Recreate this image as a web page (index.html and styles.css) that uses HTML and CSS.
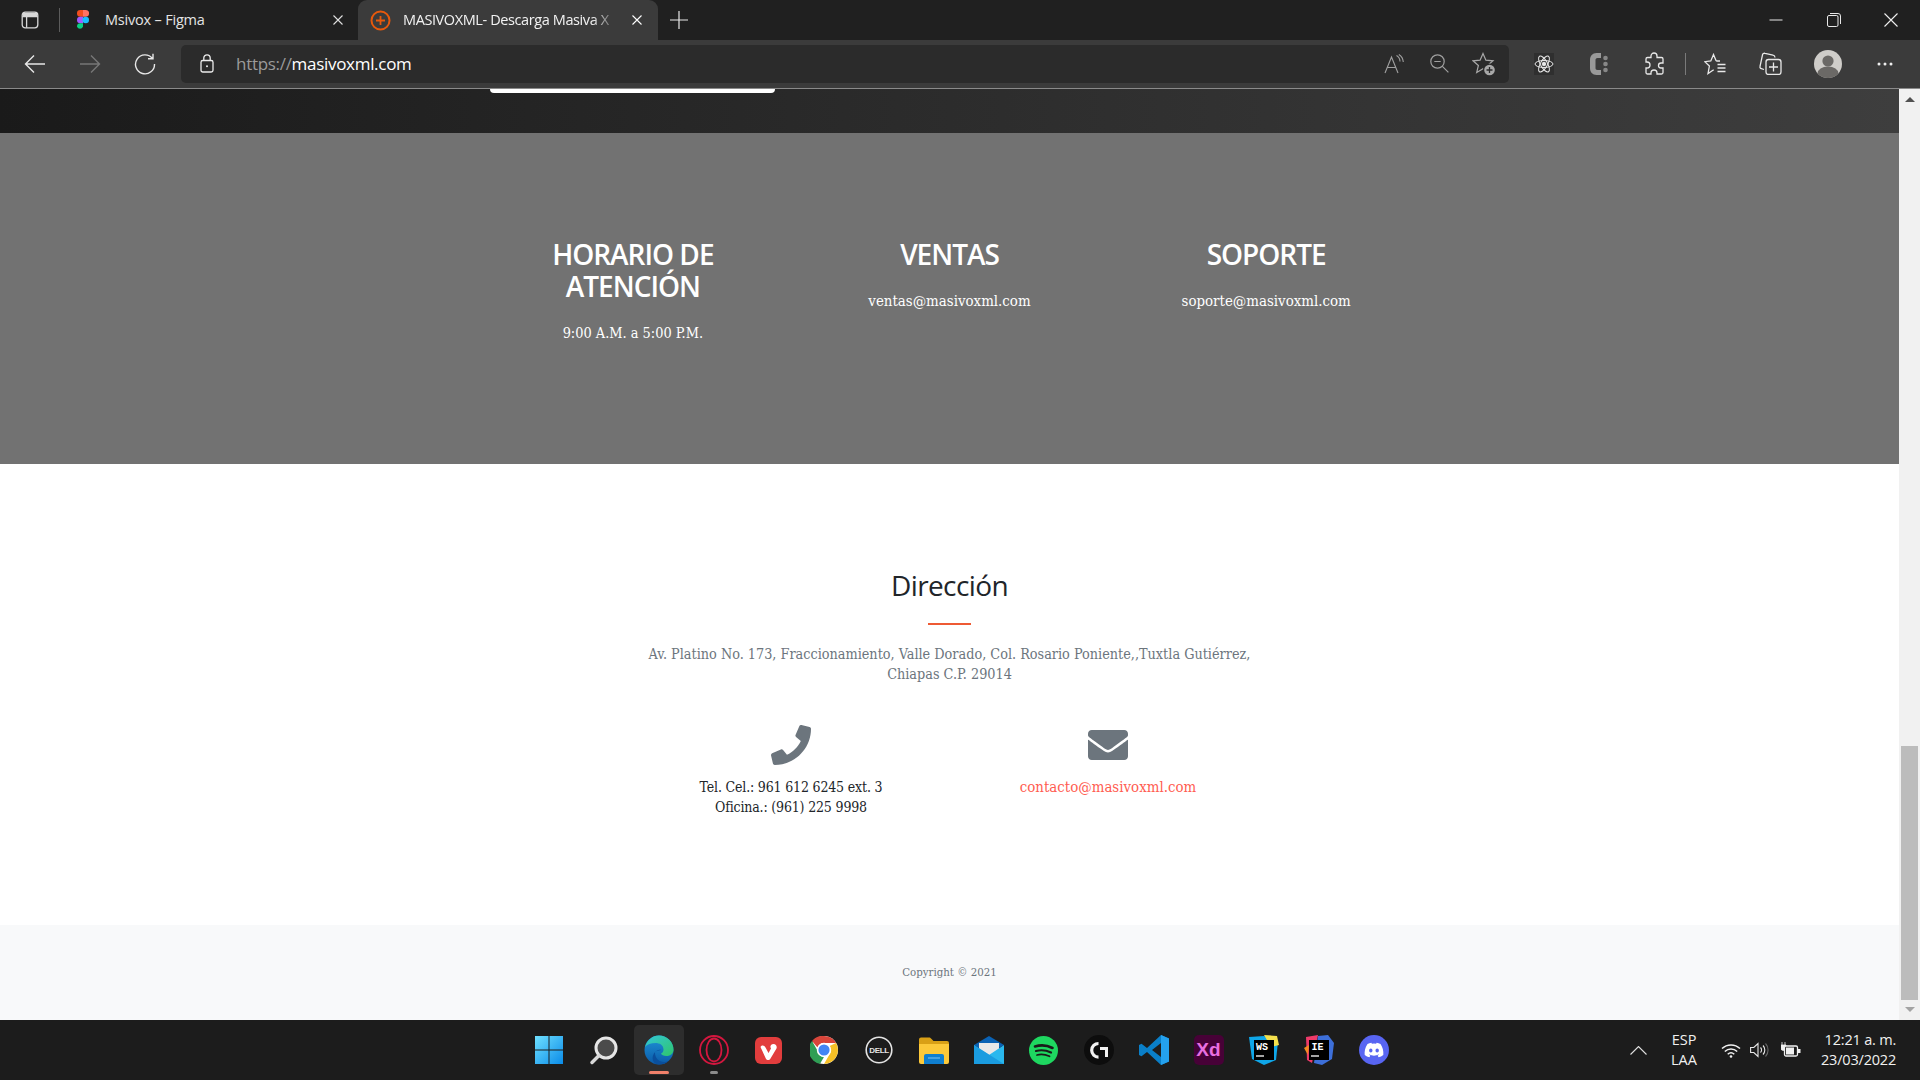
FILE: index.html
```html
<!DOCTYPE html>
<html lang="es">
<head>
<meta charset="utf-8">
<title>MASIVOXML</title>
<link rel="stylesheet" href="styles.css">
</head>
<body>
<div class="window">
  <header class="tabstrip">
    <div class="panel-btn">
      <svg width="18" height="18" viewBox="0 0 18 18" fill="none" stroke="#d8d8d8" stroke-width="1.3"><rect x="1.2" y="1.2" width="15.6" height="15.6" rx="3"/><path d="M1.2 5.6h15.6M5.6 5.6v11.2"/><rect x="1.8" y="1.8" width="14.4" height="3.6" fill="#d8d8d8" stroke="none"/></svg>
    </div>
    <div class="tab-sep"></div>
    <div class="tab">
      <svg class="fav" width="12" height="20" viewBox="0 0 12 20"><path fill="#f24e1e" d="M0 3.3A3.3 3.3 0 0 1 3.300 0H6v6.700H3.300A3.300 3.300 0 0 1 0 3.300z"/><path fill="#ff7262" d="M6 0h2.700a3.300 3.300 0 0 1 0 6.700H6z"/><path fill="#a259ff" d="M0 10a3.300 3.300 0 0 1 3.300-3.300H6v6.600H3.300A3.300 3.300 0 0 1 0 10z"/><circle fill="#1abcfe" cx="8.700" cy="10" r="3.300"/><path fill="#0acf83" d="M0 16.700a3.300 3.300 0 0 1 3.300-3.400H6v3.400a3.300 3.300 0 0 1-6 0z"/></svg>
      <span class="tab-title">Msivox – Figma</span>
      <svg class="tab-x" width="12" height="12" viewBox="0 0 12 12" stroke="#e0e0e0" stroke-width="1.1"><path d="M1.500 1.500l9 9M10.500 1.500l-9 9"/></svg>
    </div>
    <div class="tab tab-active">
      <svg class="fav" width="21" height="21" viewBox="0 0 21 21" fill="none" stroke="#e8590c"><circle cx="10.500" cy="10.500" r="9" stroke-width="2"/><path d="M10.500 6v9M6 10.500h9" stroke-width="1.800"/></svg>
      <span class="tab-title tab-fade">MASIVOXML- Descarga Masiva X</span>
      <svg class="tab-x" width="12" height="12" viewBox="0 0 12 12" stroke="#fff" stroke-width="1.1"><path d="M1.500 1.500l9 9M10.500 1.500l-9 9"/></svg>
    </div>
    <div class="new-tab">
      <svg width="18" height="18" viewBox="0 0 18 18" stroke="#e8e8e8" stroke-width="1.200"><path d="M9 0v18M0 9h18"/></svg>
    </div>
    <div class="win-ctrls">
      <div class="win-btn"><svg width="14" height="14" viewBox="0 0 14 14" stroke="#e8e8e8"><path d="M0.500 7h13"/></svg></div>
      <div class="win-btn"><svg width="14" height="14" viewBox="0 0 14 14" fill="none" stroke="#e8e8e8"><rect x="0.500" y="2.500" width="10.500" height="11" rx="1.500"/><path d="M3 0.500h8a2.500 2.500 0 0 1 2.500 2.500v8"/></svg></div>
      <div class="win-btn"><svg width="14" height="14" viewBox="0 0 14 14" stroke="#f0f0f0" stroke-width="1.100"><path d="M0.500 0.500l13 13M13.500 0.500l-13 13"/></svg></div>
    </div>
  </header>

  <nav class="toolbar">
    <div class="tool"><svg width="22" height="20" viewBox="0 0 22 20" fill="none" stroke="#e8e8e8" stroke-width="1.400"><path d="M21 10H1.500M10 1.500L1.500 10l8.500 8.500"/></svg></div>
    <div class="tool"><svg width="22" height="20" viewBox="0 0 22 20" fill="none" stroke="#777" stroke-width="1.400"><path d="M1 10h19.500M12 1.500l8.500 8.500-8.500 8.500"/></svg></div>
    <div class="tool"><svg width="22" height="22" viewBox="0 0 22 22" fill="none" stroke="#e8e8e8" stroke-width="1.400"><path d="M18.500 5.500A9.500 9.500 0 1 0 20.500 11M19 0.800v5h-5"/></svg></div>
    <div class="address">
      <svg class="lock" width="14" height="19" viewBox="0 0 14 19" fill="none" stroke="#ececec" stroke-width="1.300"><rect x="1" y="6.500" width="12" height="11.500" rx="1.800"/><path d="M3.800 6.500V4a3.200 3.200 0 0 1 6.400 0v2.500"/><circle cx="7" cy="12.300" r="1" fill="#ececec" stroke="none"/></svg>
      <span class="url"><span class="url-dim">https://</span>masivoxml.com</span>
      <div class="addr-icons">
        <div class="addr-icon"><svg width="20" height="20" viewBox="0 0 20 20" fill="none" stroke="#a0a0a0" stroke-width="1.100"><path d="M1 19L7.500 3 14 19M3.400 13.500h8.200M12.500 1.500a7 7 0 0 1 3.500 6M14.800 0.500a9.500 9.500 0 0 1 4.500 7.500"/></svg></div>
        <div class="addr-icon"><svg width="19" height="19" viewBox="0 0 19 19" fill="none" stroke="#a0a0a0" stroke-width="1.200"><circle cx="7.500" cy="7.500" r="6.700"/><path d="M12.400 12.400l6 6M4.300 7.500h6.400"/></svg></div>
        <div class="addr-icon"><svg width="24" height="24" viewBox="0 0 24 24" fill="none" stroke="#a8a8a8" stroke-width="1.200"><path d="M11 1.500l2.900 6.700 7.100.6-5.400 4.700 1.700 7-6.300-3.700-6.300 3.700 1.700-7L1 8.800l7.100-.6z"/><circle cx="17.500" cy="18" r="6.500" fill="#2b2b2b" stroke="none"/><circle cx="17.500" cy="18" r="5.300" fill="#a8a8a8" stroke="none"/><path d="M17.500 15v6M14.500 18h6" stroke="#2b2b2b" stroke-width="1.300"/></svg></div>
      </div>
    </div>
    <div class="tool-group">
      <div class="tool"><svg width="20" height="22" viewBox="0 0 20 22" fill="none" stroke="#e8e8e8" stroke-width="1"><rect width="20" height="22" fill="#2f2f2f" stroke="none"/><ellipse cx="10" cy="11" rx="9" ry="3.500"/><ellipse cx="10" cy="11" rx="9" ry="3.500" transform="rotate(60 10 11)"/><ellipse cx="10" cy="11" rx="9" ry="3.500" transform="rotate(120 10 11)"/><circle cx="10" cy="11" r="1.800" fill="#e8e8e8"/></svg></div>
      <div class="tool"><svg width="20" height="24" viewBox="0 0 20 24"><path d="M12 1H7.500C3.500 1 1 4 1 8v8c0 4 2.500 7 6.500 7H12v-5H8.500C7 18 6.500 17 6.500 16V8c0-1 .5-2 2-2H12z" fill="#999"/><circle cx="16.500" cy="6" r="2.300" fill="#888"/><circle cx="16.500" cy="12" r="2.300" fill="#888"/><circle cx="16.500" cy="18" r="2.300" fill="#888"/></svg></div>
      <div class="tool"><svg width="20" height="23" viewBox="0 0 20 23" fill="none" stroke="#e8e8e8" stroke-width="1.300"><path d="M7 5.500V4a3 3 0 0 1 6 0v1.500h4.500a1.500 1.500 0 0 1 1.500 1.500v4h-2a2.500 2.500 0 0 0 0 5h2v4.500a1.500 1.500 0 0 1-1.500 1.500H13v-1a3 3 0 0 0-6 0v1H3.500A1.500 1.500 0 0 1 2 20.500V16h1a3 3 0 0 0 0-6H2V7a1.500 1.500 0 0 1 1.500-1.500z"/></svg></div>
      <div class="tool-sep"></div>
      <div class="tool"><svg width="22" height="22" viewBox="0 0 22 22" fill="none" stroke="#e8e8e8" stroke-width="1.300"><path d="M12.200 8L9.500 1.500 6.800 8 .8 8.700l4.600 4.400L4 20.500l5.700-3.800M12.200 8h3.800M13.500 11.500h8M13.500 15h8M13.500 18.500h8"/></svg></div>
      <div class="tool"><svg width="23" height="23" viewBox="0 0 23 23" fill="none" stroke="#e8e8e8" stroke-width="1.300"><path d="M5 17.500l-2.700-.8A1.800 1.800 0 0 1 1 14.500L3.500 3A2 2 0 0 1 6 1.300l8 1.900a2.500 2.500 0 0 1 2 2.300"/><rect x="7" y="7.500" width="15" height="15" rx="2.500"/><path d="M14.500 10.500v9M10 15h9"/></svg></div>
      <div class="avatar"><svg width="28" height="28" viewBox="0 0 28 28"><circle cx="14" cy="14" r="14" fill="#cfcdc9"/><circle cx="14" cy="11" r="5.600" fill="#6b6966"/><path d="M3.500 23.500a10.500 7 0 0 1 21 0A14 14 0 0 1 14 28a14 14 0 0 1-10.500-4.500z" fill="#6b6966"/></svg></div>
      <div class="tool tool-dots"><svg width="16" height="4" viewBox="0 0 16 4" fill="#eee"><circle cx="2" cy="2" r="1.500"/><circle cx="8" cy="2" r="1.500"/><circle cx="14" cy="2" r="1.500"/></svg></div>
    </div>
  </nav>

  <div class="viewport">
    <main class="page">
      <section class="hero-end">
        <div class="hero-inner"><div class="hero-btn"></div></div>
      </section>
      <section class="contact-band">
        <div class="band-grid">
          <div class="band-col">
            <h3 class="band-title">HORARIO DE ATENCIÓN</h3>
            <p class="band-text band-time">9:00 A.M. a 5:00 P.M.</p>
          </div>
          <div class="band-col">
            <h3 class="band-title">VENTAS</h3>
            <p class="band-text">ventas@masivoxml.com</p>
          </div>
          <div class="band-col">
            <h3 class="band-title">SOPORTE</h3>
            <p class="band-text">soporte@masivoxml.com</p>
          </div>
        </div>
      </section>
      <section class="address-section">
        <h2 class="addr-title">Dirección</h2>
        <div class="addr-rule"></div>
        <p class="addr-text">Av. Platino No. 173, Fraccionamiento, Valle Dorado, Col. Rosario Poniente,,Tuxtla Gutiérrez, Chiapas C.P. 29014</p>
        <div class="contact-grid">
          <div class="contact-col">
            <svg class="contact-icon" width="40" height="40" viewBox="0 0 512 512"><path fill="#6c757d" d="M493.4 24.6l-104-24c-11.3-2.6-22.9 3.300-27.500 13.900l-48 112c-4.200 9.800-1.400 21.300 6.900 28l60.600 49.600c-36 76.700-98.900 140.500-177.200 177.200l-49.600-60.600c-6.800-8.300-18.200-11.100-28-6.900l-112 48C3.900 366.500-2 378.100.6 389.400l24 104C27.100 504.200 36.700 512 48 512c256.100 0 464-207.500 464-464 0-11.200-7.700-20.900-18.600-23.400z"/></svg>
            <p class="contact-line">Tel. Cel.: 961 612 6245 ext. 3</p>
            <p class="contact-line">Oficina.: (961) 225 9998</p>
          </div>
          <div class="contact-col">
            <svg class="contact-icon" width="40" height="40" viewBox="0 0 512 512"><path fill="#6c757d" d="M502.300 190.800c3.900-3.100 9.700-.2 9.700 4.700V400c0 26.500-21.500 48-48 48H48c-26.500 0-48-21.500-48-48V195.600c0-5 5.700-7.800 9.700-4.700 22.400 17.400 52.100 39.500 154.100 113.600 21.100 15.400 56.700 47.800 92.200 47.600 35.700.3 72-32.800 92.300-47.600 102-74.100 131.600-96.300 154-113.700zM256 320c23.200.4 56.600-29.200 73.400-41.400 132.700-96.300 142.800-104.700 173.400-128.700 5.800-4.500 9.200-11.500 9.200-18.900v-19c0-26.500-21.500-48-48-48H48C21.500 64 0 85.500 0 112v19c0 7.400 3.400 14.300 9.200 18.900 30.600 23.900 40.700 32.400 173.400 128.700 16.800 12.200 50.200 41.800 73.400 41.400z"/></svg>
            <p class="contact-line contact-link">contacto@masivoxml.com</p>
          </div>
        </div>
      </section>
      <footer class="page-footer">Copyright © 2021</footer>
    </main>
    <aside class="scrollbar">
      <div class="sb-arrow sb-up"></div>
      <div class="sb-track"><div class="sb-thumb"></div></div>
      <div class="sb-arrow sb-down"></div>
    </aside>
  </div>

  <footer class="taskbar">
    <div class="task-item"><svg width="30" height="30" viewBox="0 0 30 30"><defs><linearGradient id="w" x1="0" y1="0" x2="1" y2="1"><stop offset="0" stop-color="#6fe0ff"/><stop offset="1" stop-color="#0a8be8"/></linearGradient></defs><path fill="url(#w)" d="M1 1h13.500v13.500H1zM15.500 1H29v13.500H15.500zM1 15.500h13.500V29H1zM15.500 15.500H29V29H15.500z"/></svg></div>
    <div class="task-item"><svg width="30" height="30" viewBox="0 0 30 30"><circle cx="17" cy="13" r="10" fill="#4b4b4b" stroke="#e6e6e6" stroke-width="3"/><path d="M10 20.500L3 27.500" stroke="#d8d8d8" stroke-width="3.500" stroke-linecap="round"/></svg></div>
    <div class="task-item task-active"><svg width="30" height="30" viewBox="0 0 30 30"><defs><linearGradient id="e1" x1="0" y1="0" x2="1" y2="1"><stop offset="0" stop-color="#33c6d8"/><stop offset="1" stop-color="#2fc56a"/></linearGradient><linearGradient id="e2" x1="0" y1="0" x2="0" y2="1"><stop offset="0" stop-color="#1f95d8"/><stop offset="1" stop-color="#0b5aa8"/></linearGradient></defs><circle cx="15" cy="15" r="14.500" fill="url(#e2)"/><path d="M1 12C3 5 8.500.5 15 .5 23 .5 29.500 7 29.500 14.500c0 4-3 6.500-7 6.500-3 0-5-1-5.500-2.500 2-1 2.500-2.500 2.500-4C19.500 10 15.500 8 11.500 8 7 8 3 9.500 1 12z" fill="url(#e1)"/><path d="M11 18c0 5 4 9 9 9 2.500 0 4-.6 5-1.500-3 3-6 4-10 4-2 0-5-1-6-4-1-3 0-7 3-9 1-1 3-2 5-1.500-3 .5-6 1-6 3z" fill="#0a4f9c"/></svg><span class="task-pip pip-orange"></span></div>
    <div class="task-item"><svg width="30" height="30" viewBox="0 0 30 30" fill="none" stroke="#d4173f" stroke-width="1.800"><circle cx="15" cy="15" r="14"/><ellipse cx="15" cy="15" rx="7.500" ry="11.500"/></svg><span class="task-pip pip-gray"></span></div>
    <div class="task-item"><svg width="27" height="27" viewBox="0 0 27 27"><rect width="27" height="27" rx="6" fill="#e23d3d"/><path d="M5.500 10c1.500-2.500 4-1.500 5 .5l3 5.500 2.500-4.500c-1.500-2 0-4.500 2.500-4.500 2.800 0 4 2.800 2.700 5l-5.700 9.500c-1.200 2-3.500 2-4.700 0z" fill="#fff"/></svg></div>
    <div class="task-item"><svg width="28" height="28" viewBox="0 0 28 28"><circle cx="14" cy="14" r="14" fill="#fff"/><path d="M14 0a14 14 0 0 1 12.100 7H14a7 7 0 0 0-6.500 4.500L2 5A14 14 0 0 1 14 0z" fill="#d8453a"/><path d="M2 5l6 10.500A7 7 0 0 0 14 21l-4 6.800A14 14 0 0 1 2 5z" fill="#2f9e55"/><path d="M26.100 7A14 14 0 0 1 14 28l6-10.500A7 7 0 0 0 19.500 10z" fill="#f6c026"/><circle cx="14" cy="14" r="6.400" fill="#4285f4" stroke="#fff" stroke-width="1.600"/></svg></div>
    <div class="task-item"><svg width="28" height="28" viewBox="0 0 28 28"><circle cx="14" cy="14" r="12.800" fill="none" stroke="#e4e4e4" stroke-width="1.600"/><text class="dell-text" x="14" y="17" text-anchor="middle">DELL</text></svg></div>
    <div class="task-item"><svg width="30" height="27" viewBox="0 0 30 27"><path d="M0 2.500A2 2 0 0 1 2 .5h8c1 0 1.500.4 2.300 1.200L14.500 4H28a2 2 0 0 1 2 2v3H0z" fill="#d9a016"/><path d="M0 7h30v18a2 2 0 0 1-2 2H2a2 2 0 0 1-2-2z" fill="#fcc93a"/><path d="M5 19a2 2 0 0 1 2-2h16a2 2 0 0 1 2 2v8H5z" fill="#0f7fd0"/><path d="M9 21h12" stroke="#7cc6f5" stroke-width="1"/></svg></div>
    <div class="task-item"><svg width="30" height="28" viewBox="0 0 30 28"><path d="M15 0L30 9 15 18 0 9z" fill="#0a62b4"/><path d="M5 7h20v9l-10 6-10-6z" fill="#e8e8e8"/><path d="M0 9l15 10L30 9v19H0z" fill="#2ab8ee"/><path d="M0 9l30 19H0z" fill="#1a9ce0"/></svg></div>
    <div class="task-item"><svg width="29" height="29" viewBox="0 0 29 29"><circle cx="14.500" cy="14.500" r="14.500" fill="#1ed760"/><g fill="none" stroke="#1a1a1a" stroke-linecap="round"><path d="M6 10.500c6-1.800 12-1.300 17.500 1.500" stroke-width="2.600"/><path d="M7 15c5-1.300 10-.9 15 1.500" stroke-width="2.200"/><path d="M8 19c4-1 8-.7 12.500 1.300" stroke-width="1.800"/></g></svg></div>
    <div class="task-item"><svg width="30" height="30" viewBox="0 0 30 30"><circle cx="15" cy="15" r="15" fill="#0d0d0d"/><path d="M14.500 8.500a6.800 6.800 0 1 0 0 13.600" fill="none" stroke="#f2f2f2" stroke-width="3.200"/><path d="M16 13.500h6.500V22" fill="none" stroke="#f2f2f2" stroke-width="3"/></svg></div>
    <div class="task-item"><svg width="30" height="30" viewBox="0 0 30 30"><path d="M22 0l8 3.500v23L22 30 8 17l-5.500 4.300L0 20V10l2.500-1.300L8 13z" fill="#0a7fc8"/><path d="M22 0l8 3.500v23L22 30z" fill="#24a1ee"/><path d="M22 8v14l-9-7z" fill="#1e1e1e"/></svg></div>
    <div class="task-item"><div class="xd-tile">Xd</div></div>
    <div class="task-item"><svg width="30" height="30" viewBox="0 0 30 30"><path d="M0 2l15-1 14 6-2 18-12 5L3 24z" fill="#0fa6e8"/><path d="M15 0l13 1 2 9-8 2z" fill="#f4e04d"/><rect x="5" y="5" width="20" height="20" fill="#000"/><text class="ide-text" x="7" y="15">WS</text><path d="M7 21h8" stroke="#fff" stroke-width="1.300"/></svg></div>
    <div class="task-item"><svg width="30" height="30" viewBox="0 0 30 30"><path d="M2 2l12-2-6 28-5-3z" fill="#ee3a6a"/><path d="M0 13l5-3-1 10z" fill="#f58a1f"/><path d="M14 1l10-1 6 8-2 16-10 6-8-2z" fill="#3d6fd9"/><rect x="5" y="5" width="20" height="20" fill="#000"/><text class="ide-text" x="7.500" y="15">IE</text><path d="M7 21h8" stroke="#fff" stroke-width="1.300"/></svg></div>
    <div class="task-item"><svg width="30" height="30" viewBox="0 0 30 30"><circle cx="15" cy="15" r="15" fill="#5865f2"/><path d="M21.500 9c-1.300-.6-2.500-1-3.900-1.200l-.5 1a12 12 0 0 0-4.200 0l-.5-1c-1.400.2-2.700.6-3.900 1.200C6 12.700 5.400 16.300 5.700 19.900c1.500 1.100 3 1.800 4.700 2.300l1-1.600-1.600-.8.400-.3c3.200 1.500 6.400 1.500 9.600 0l.4.300-1.600.8 1 1.600c1.700-.5 3.200-1.200 4.700-2.300.4-4.100-.7-7.700-2.800-10.900zM11.800 17.600c-.9 0-1.700-.9-1.700-2s.8-2 1.700-2 1.700.9 1.700 2-.8 2-1.700 2zm6.400 0c-.9 0-1.700-.9-1.700-2s.8-2 1.700-2 1.700.9 1.700 2-.8 2-1.700 2z" fill="#fff"/></svg></div>
    <div class="tray">
      <svg class="tray-chev" width="17" height="9" viewBox="0 0 17 9" fill="none" stroke="#e0e0e0" stroke-width="1.100"><path d="M0.500 8.500l8-8 8 8"/></svg>
      <div class="tray-lang"><span>ESP</span><span>LAA</span></div>
      <svg class="tray-wifi" width="20" height="15" viewBox="0 0 20 15" fill="none" stroke="#f0f0f0" stroke-width="1.500"><path d="M1 5.500a13 13 0 0 1 18 0M3.800 8.500a9 9 0 0 1 12.400 0M6.700 11.200a5 5 0 0 1 6.600 0"/><circle cx="10" cy="13.500" r="1.300" fill="#f0f0f0" stroke="none"/></svg>
      <svg class="tray-vol" width="20" height="16" viewBox="0 0 20 16" fill="none" stroke="#e8e8e8" stroke-width="1.100"><path d="M0.600 5.500h3.200L8 1.500v13l-4.200-4H.6z"/><path d="M10.500 5.500a3.500 3.500 0 0 1 0 5M13 3.500a6.500 6.500 0 0 1 0 9"/><path d="M15.500 1.500a9.500 9.500 0 0 1 0 13" stroke="#666"/></svg>
      <svg class="tray-bat" width="20" height="16" viewBox="0 0 20 16"><path d="M1 0v3M4 0v3M0 3h5v3a2.500 2.500 0 0 1-5 0z" fill="#f0f0f0" stroke="#f0f0f0" stroke-width=".8"/><rect x="3.500" y="4" width="13" height="10" rx="1.500" fill="#1c1c1c" stroke="#f0f0f0" stroke-width="1.300"/><rect x="5" y="5.500" width="8" height="7" fill="#f0f0f0"/><rect x="17" y="7" width="2.500" height="4" fill="#f0f0f0"/></svg>
      <div class="tray-clock"><span>12:21 a. m.</span><span>23/03/2022</span></div>
    </div>
  </footer>
</div>
</body>
</html>
```

FILE: styles.css
```css
* { box-sizing: border-box; }
html, body { margin: 0; padding: 0; height: 100%; overflow: hidden; }
body { font-family: "Open Sans", "Noto Sans", sans-serif; background: #1e1e1e; }
p, h2, h3 { margin: 0; font-weight: 400; }

.window { display: flex; flex-direction: column; height: 1080px; width: 1920px; }

/* tab strip */
.tabstrip { display: flex; align-items: center; height: 40px; flex: none; background: #202020; color: #e4e4e4; }
.panel-btn { width: 59px; height: 40px; display: flex; align-items: center; justify-content: center; flex: none; }
.tab-sep { width: 1px; height: 24px; background: #5c5c5c; flex: none; }
.tab { display: flex; align-items: center; height: 40px; flex: none; width: 298px; padding: 0 14px 0 17px; font-size: 14.500px; letter-spacing: -0.2px; }
.tab-title { flex: 1; margin-left: 16px; margin-bottom: 2px; white-space: nowrap; overflow: hidden; }
.tab-active { width: 300px; background: #3b3b3b; border-radius: 9px 9px 0 0; padding: 0 15px 0 12px; color: #f2f2f2; letter-spacing: -0.4px; }
.tab-active .tab-title { margin-left: 12px; margin-right: 8px; }
.tab-fade { -webkit-mask-image: linear-gradient(to right, #000 86%, transparent 98%); mask-image: linear-gradient(to right, #000 86%, transparent 98%); }
.tab-x { flex: none; }
.new-tab { width: 42px; display: flex; justify-content: center; flex: none; }
.win-ctrls { display: flex; margin-left: auto; }
.win-btn { width: 57.5px; height: 40px; display: flex; align-items: center; justify-content: center; }

/* toolbar */
.toolbar { display: flex; align-items: center; height: 49px; flex: none; padding: 0 0 1px 7.5px; background: #3b3b3b; border-bottom: 1px solid #8a8a8a; }
.tool { width: 55px; height: 38px; display: flex; align-items: center; justify-content: center; flex: none; }
.address { display: flex; align-items: center; width: 1328px; height: 38px; margin-left: 8.5px; background: #2b2b2b; border-radius: 5px; flex: none; padding-left: 19px; }
.lock { flex: none; }
.url { margin-left: 22px; font-size: 17px; letter-spacing: -0.3px; color: #fff; }
.url-dim { color: #9a9a9a; }
.addr-icons { display: flex; margin-left: auto; padding-right: 2.5px; }
.addr-icon { width: 45px; display: flex; justify-content: center; align-items: center; height: 38px; }
.tool-group { display: flex; align-items: center; margin-left: 7.5px; }
.tool-sep { width: 1px; height: 22px; background: #7a7a7a; margin: 0 2px 0 3px; flex: none; }
.avatar { width: 55px; height: 38px; display: flex; align-items: center; justify-content: center; margin-left: 3px; flex: none; }
.tool-dots { margin-left: 2px; }

/* page */
.viewport { display: flex; flex: 1; min-height: 0; }
.page { flex: 1; min-width: 0; display: flex; flex-direction: column; background: #fff; }
.hero-end { height: 44px; flex: none; background: linear-gradient(to right, #1a1a1a, #3e3e3e); }
.hero-inner { width: 950px; margin: 0 auto; }
.hero-btn { width: 285px; height: 4px; margin-left: 15px; background: #fff; border-radius: 0 0 12px 12px; }
.contact-band { height: 331px; flex: none; background: #727272; color: #fff; padding-top: 105px; }
.band-grid { display: grid; grid-template-columns: repeat(3, 1fr); width: 950px; margin: 0 auto; text-align: center; }
.band-col { padding: 0 70px; }
.band-title { font-size: 28px; line-height: 32px; letter-spacing: -1px; margin-bottom: 21px; font-weight: 600; }
.band-text { font-family: "DejaVu Serif Condensed", "DejaVu Serif", serif; font-size: 14.900px; line-height: 20px; white-space: nowrap; margin: 0 -40px; }
.band-time { font-size: 14.400px; }

.address-section { height: 461px; flex: none; padding-top: 101px; text-align: center; color: #212529; }
.addr-title { font-size: 28px; line-height: 40px; letter-spacing: -0.6px; font-weight: 500; }
.addr-rule { width: 43px; height: 2px; margin: 18px auto 19px; background: #ee5a34; }
.addr-text { width: 620px; margin: 0 auto; font-family: "DejaVu Serif Condensed", "DejaVu Serif", serif; font-size: 14.300px; line-height: 20px; color: #6c757d; }
.contact-grid { display: grid; grid-template-columns: 317px 317px; justify-content: center; margin-top: 41px; }
.contact-col { display: flex; flex-direction: column; align-items: center; }
.contact-icon { margin-bottom: 12px; }
.contact-line { font-family: "DejaVu Serif Condensed", "DejaVu Serif", serif; font-size: 14px; letter-spacing: -0.17px; line-height: 20px; color: #212529; }
.contact-link { font-size: 14.900px; letter-spacing: 0; color: #ff5c50; }
.page-footer { flex: 1; background: #f8f9fa; display: flex; align-items: center; justify-content: center; padding-bottom: 2px; font-family: "DejaVu Serif Condensed", "DejaVu Serif", serif; font-size: 11.400px; color: #6c757d; }

/* scrollbar */
.scrollbar { width: 21px; flex: none; background: #f1f1f1; display: flex; flex-direction: column; align-items: center; }
.sb-arrow { width: 0; height: 0; border-left: 5px solid transparent; border-right: 5px solid transparent; flex: none; }
.sb-up { margin-top: 8px; border-bottom: 5px solid #505050; }
.sb-down { margin-bottom: 8px; border-top: 5px solid #a3a3a3; }
.sb-track { flex: 1; width: 100%; padding: 0 2px 7px; display: flex; flex-direction: column; justify-content: flex-end; }
.sb-thumb { height: 254px; background: #bcbcbc; }

/* taskbar */
.taskbar { display: flex; align-items: center; height: 60px; flex: none; background: #1c1c1c; padding-left: 521px; color: #f0f0f0; }
.task-item { position: relative; width: 55px; height: 50px; display: flex; align-items: center; justify-content: center; flex: none; }
.task-active { width: 50px; margin: 0 2.5px; background: #2d2d2d; border-radius: 5px; }
.task-pip { position: absolute; bottom: 1px; left: 50%; height: 3px; border-radius: 2px; transform: translateX(-50%); }
.pip-orange { width: 20px; background: #f0806a; }
.pip-gray { width: 8px; background: #8c8c8c; }
.dell-text { font-family: "Liberation Sans", sans-serif; font-size: 8px; font-weight: 700; fill: #e4e4e4; letter-spacing: -0.4px; }
.xd-tile { width: 30px; height: 30px; border-radius: 5px; background: #470137; color: #e96fe0; font: 700 19px/30px "Liberation Sans", sans-serif; text-align: center; }
.ide-text { font-family: "Liberation Mono", monospace; font-size: 10px; font-weight: 700; fill: #fff; }
.tray { display: flex; align-items: center; margin-left: auto; height: 60px; font-size: 14.500px; line-height: 20px; }
.tray-chev { margin-right: 22px; flex: none; }
.tray-lang { display: flex; flex-direction: column; align-items: center; width: 30px; margin-right: 22px; }
.tray-wifi { margin-right: 9px; flex: none; }
.tray-vol { margin-right: 11px; flex: none; }
.tray-bat { margin-right: 10px; flex: none; }
.tray-clock { display: flex; flex-direction: column; align-items: flex-end; padding-right: 24px; width: 109px; letter-spacing: -0.2px; }
```
